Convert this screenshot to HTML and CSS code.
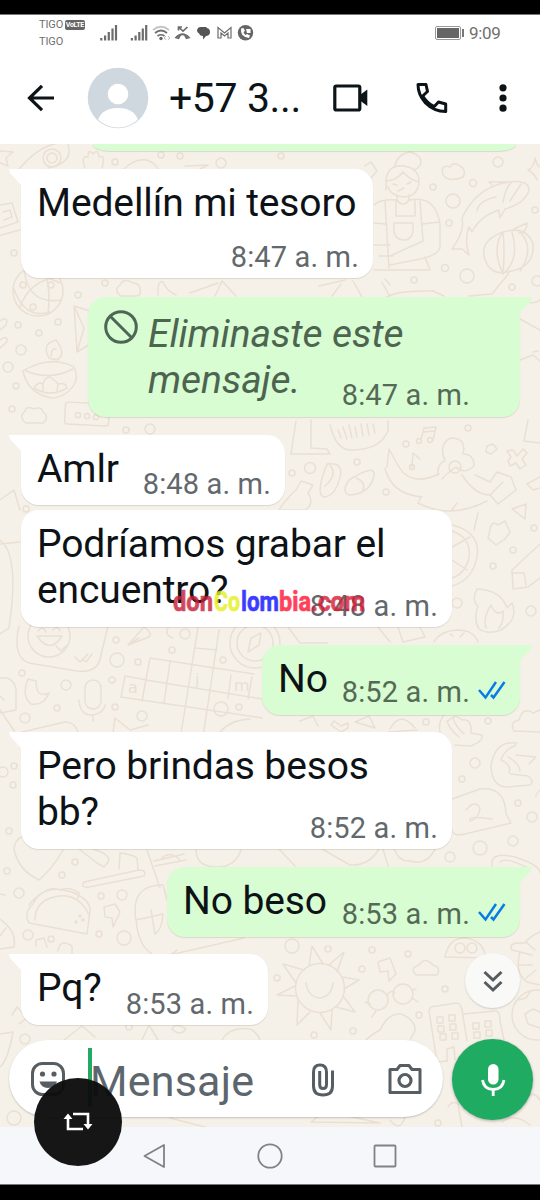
FILE: index.html
```html
<!DOCTYPE html>
<html lang="es">
<head>
<meta charset="utf-8">
<title>Chat</title>
<link rel="stylesheet" href="styles.css">
</head>
<body>
<div class="phone">
  <div class="statusbar">
    <div class="carriers"><div>TIGO <b class="volte">VoLTE</b></div><div>TIGO</div></div>
    <svg class="status-icons" width="156" height="24" viewBox="100 20 156 24">
      <g stroke="#6c6c6c" stroke-width="2.2"><path d="M101.3 40.500V38M105.100 40.500V35.500M108.800 40.500V32M112.500 40.500V28.500M116 40.500V25M131.900 40.500V38M135.600 40.500V35.500M139.300 40.500V32M142.800 40.500V28.500M146.200 40.500V25"/></g>
      <g fill="none" stroke="#6c6c6c" stroke-width="1.700"><path d="M153 30Q161 23.500 169 30" stroke="#c4c4c4"/><path d="M155 33Q161 28 167 33M157.500 36Q161 33.500 164.500 36"/><path d="M176 37.500Q182.500 30.500 189 37.500L186.500 38.300L184.800 35Q182.500 34 180.200 35L178.500 38.300ZM178.500 27L183 31.200L187.500 27M178.500 30.500V27H182"/></g>
      <circle cx="161" cy="38.500" r="1.700" fill="#666"/><path d="M166 36.200L164 38L166 39.800M168 36.200L170 38L168 39.800" stroke="#bbb" fill="none"/>
      <path d="M200.500 27H206Q207.500 28.500 208.500 28.500Q210.500 30 210 33Q209 36 206 36L203 39.500V36Q200 36 199 33.500Q197 33 197 30Q198 27 200.500 27Z" fill="#555"/>
      <path d="M218 38V27.500L224.500 33L231 27.500V38H228V33L224.500 36L221 33V38Z" fill="none" stroke="#6c6c6c" stroke-width="1.200"/>
      <circle cx="245.500" cy="32.700" r="7.700" fill="#666"/><path d="M241 28.500Q240 37 249 38L250 35.500L247 34L245.500 35Q244 34 243.500 32L245 31L243.500 28ZM246 29H250.500V33H247Z" fill="#fff"/>
    </svg>
    <div class="battery"><i></i></div>
    <span class="clock">9:09</span>
  </div>
  <header class="appbar">
    <svg class="ic-back" width="28" height="28" viewBox="27 84 28 28"><path d="M54 98H29.500M42 85.800L29.500 98L42 110.200" fill="none" stroke="#0d1418" stroke-width="3.200"/></svg>
    <svg class="avatar" width="62" height="62" viewBox="0 0 62 62"><clipPath id="av"><circle cx="31" cy="31" r="29.500"/></clipPath><circle cx="31" cy="31" r="30.300" fill="#cfd8df"/><g clip-path="url(#av)" fill="#fff"><circle cx="31" cy="27" r="10.300"/><path d="M10 58Q12 41 31 41Q50 41 52 58V62H10Z"/></g></svg>
    <h1 class="name">+57 3...</h1>
    <svg class="ic-video" width="36" height="30" viewBox="332 83 36 30"><rect x="334.800" y="86" width="25" height="24" rx="1.500" fill="none" stroke="#0d1418" stroke-width="3.200"/><path d="M360 95L367.300 89.500V106L360 100.500Z" fill="#0d1418"/></svg>
    <svg class="ic-phone" width="34" height="34" viewBox="415 81 34 34"><path d="M418 84.500H426L427.500 91.500L422.700 96Q427 103 434 106.700L438.500 102L445.700 104V111.500Q434 111.500 425.500 103Q418 94.500 418 84.500Z" fill="none" stroke="#0d1418" stroke-width="3" stroke-linejoin="round"/></svg>
    <svg class="ic-more" width="8" height="30" viewBox="0 0 8 30" fill="#0d1418"><circle cx="4" cy="4.800" r="3.600"/><circle cx="4" cy="15" r="3.600"/><circle cx="4" cy="25.200" r="3.600"/></svg>
  </header>
  <main class="chat">
    <svg class="wallpaper" width="540" height="983" viewBox="0 144 540 983">
      <g>
        <circle cx="115" cy="162" r="3"/><circle cx="161" cy="155" r="3"/><circle cx="180" cy="156" r="3"/><circle cx="221" cy="163" r="5"/><circle cx="281" cy="156" r="3"/><circle cx="498" cy="162" r="5"/><circle cx="433" cy="187" r="3"/><circle cx="473" cy="183" r="3.500"/><circle cx="453" cy="201" r="7"/><circle cx="449" cy="223" r="3"/><circle cx="445" cy="268" r="3.500"/><circle cx="467" cy="276" r="7"/><circle cx="414" cy="280" r="3"/><circle cx="512" cy="287" r="3"/><circle cx="537" cy="281" r="5"/><circle cx="535" cy="210" r="3"/><circle cx="14" cy="253" r="3"/><circle cx="105" cy="283" r="3"/><circle cx="78" cy="295" r="3"/><circle cx="18" cy="325" r="3"/><circle cx="58" cy="322" r="3"/><circle cx="39" cy="333" r="3"/><circle cx="21" cy="350" r="5"/><circle cx="8" cy="367" r="5"/><circle cx="16" cy="386" r="3"/><circle cx="12" cy="409" r="3"/><circle cx="126" cy="430" r="3"/><circle cx="150" cy="429" r="5"/><circle cx="468" cy="428" r="3"/><circle cx="406" cy="444" r="3"/><circle cx="310" cy="468" r="5.500"/><circle cx="292" cy="473" r="3"/><circle cx="357" cy="462" r="3"/><circle cx="386" cy="492" r="3"/><circle cx="26" cy="509" r="3"/><circle cx="493" cy="566" r="3"/><circle cx="513" cy="550" r="3"/><circle cx="534" cy="528" r="3"/><circle cx="457" cy="603" r="5"/><circle cx="531" cy="611" r="5"/><circle cx="116" cy="640" r="3"/><circle cx="117" cy="660" r="7"/><circle cx="138" cy="662" r="3"/><circle cx="185" cy="634" r="5"/><circle cx="172" cy="650" r="3"/><circle cx="223" cy="660" r="3"/><circle cx="22" cy="673" r="3"/><circle cx="66" cy="685" r="5"/><circle cx="112" cy="680" r="3"/><circle cx="57" cy="708" r="3"/><circle cx="25" cy="718" r="5"/><circle cx="142" cy="716" r="5"/><circle cx="115" cy="707" r="3"/><circle cx="221" cy="709" r="7"/><circle cx="239" cy="707" r="3"/><circle cx="14" cy="766" r="3"/><circle cx="3" cy="772" r="5"/><circle cx="13" cy="785" r="3"/><circle cx="9" cy="831" r="3"/><circle cx="7" cy="871" r="3"/><circle cx="75" cy="862" r="3"/><circle cx="62" cy="875" r="3"/><circle cx="19" cy="893" r="5"/><circle cx="101" cy="896" r="3"/><circle cx="122" cy="895" r="5"/><circle cx="28" cy="935" r="5"/><circle cx="51" cy="939" r="3"/><circle cx="99" cy="934" r="3"/><circle cx="124" cy="938" r="7"/><circle cx="475" cy="763" r="5"/><circle cx="462" cy="779" r="3"/><circle cx="518" cy="803" r="3"/><circle cx="532" cy="817" r="5"/><circle cx="480" cy="848" r="7"/><circle cx="513" cy="841" r="5"/><circle cx="450" cy="857" r="5"/><circle cx="426" cy="722" r="3"/><circle cx="488" cy="721" r="3"/><circle cx="292" cy="946" r="7"/><circle cx="328" cy="949" r="3"/><circle cx="372" cy="950" r="3"/><circle cx="408" cy="954" r="3"/><circle cx="362" cy="969" r="3"/><circle cx="277" cy="978" r="3"/><circle cx="445" cy="989" r="3"/><circle cx="419" cy="1015" r="3"/><circle cx="353" cy="1031" r="3"/><circle cx="314" cy="1035" r="3"/><circle cx="14" cy="1118" r="7"/><circle cx="438" cy="1123" r="3"/><circle cx="25" cy="1039" r="5"/><circle cx="129" cy="1027" r="3"/>
      </g>
      <circle cx="52" cy="158" r="9"/><circle cx="52" cy="158" r="5"/><path d="M18 170Q38 147 55 144M68 144Q74 163 48 168M0 151L13 152L6 158L8 166L0 163M85 168Q80 155 88 157Q88 148 93 154Q98 148 99 157Q106 154 102 168M124 169Q135 158 147 160Q155 163 158 169M185 166L208 165L200 169"/>
      <path d="M0 205L12 203L18 222L0 228M1 235L20 230M3 212L10 210L12 217L4 220"/>
      <circle cx="38" cy="291" r="25"/><path d="M24 270Q28 305 61 300M20 307Q30 280 58 277M14 289Q25 320 50 312M38 266Q52 275 48 314"/><circle cx="23" cy="285" r="3"/><circle cx="51" cy="285" r="3"/><circle cx="33" cy="307" r="3"/>
      <path d="M90 311L74 306L77 352L90 344M74 306L84 328L77 352M0 321Q9 315 6 325L0 330M0 340Q8 334 7 342L0 348"/>
      <path d="M49 358Q41 344 56 340Q67 354 57 360ZM51 356Q51 348 56 349M23 371Q50 355 74 367Q78 376 75 383Q67 397 52 398Q28 394 23 371ZM26 371Q50 381 73 369M34 388Q38 381 43 384Q45 377 50 377Q56 381 58 384Q66 382 67 388Q50 398 34 388ZM43 392L43 384M57 392L58 384"/>
      <rect x="65" y="403" width="44" height="22" rx="3" transform="rotate(3 85 414)"/><circle cx="78" cy="415" r="2.600"/><circle cx="87" cy="416" r="2.600"/><circle cx="96" cy="417" r="2.600"/>
      <path d="M26 423Q18 417 25 411Q27 405 34 409Q42 406 43 412Q50 417 43 423Z"/><path d="M121 296Q113 290 120 285Q124 277 133 283Q140 283 140 290Q142 296 135 296ZM158 295Q157 280 163 282Q166 290 176 295M190 293L218 283M215 296L222 281L236 296M51 279L60 283"/>
      <path d="M386 190V180Q388 164 404 166Q418 168 419 180Q419 196 404 197Q391 196 388 187M387 181Q397 180 403 172Q410 180 419 182M395 166Q397 154 410 152Q424 156 420 165Q418 169 413 170M393 184L397 185M407 184L411 182M398 191L404 188M397 195V200Q403 208 409 200V195M374 205Q380 199 397 200M410 200Q436 195 440 225V248Q438 254 425 258L390 265M374 223L385 224M422 224L440 222M385 201L389 268M420 201L423 241L390 256M396 200V216H415V200M394 223H413V232Q410 241 404 240Q396 240 394 232ZM374 245H390M374 270H430L425 257M379 256L393 256"/>
      <path d="M452 249Q465 232 462 218Q475 190 503 183Q530 178 529 191Q524 204 505 209L500 218L499 210Q480 216 472 232L469 227Q464 239 469 255L462 249ZM492 185L489 182L508 182M503 202Q506 187 511 183M521 184L510 201M477 211Q478 201 496 197"/>
      <path d="M503 232Q481 240 484 256Q489 276 507 272Q535 268 533 244Q526 225 503 232M503 232Q491 248 503 274Q520 260 512 232M503 232Q505 250 503 274M521 233Q535 249 520 271M514 229L527 223Q527 232 519 233M509 273L492 294L469 296M443 175Q440 164 450 167Q453 161 460 166Q467 170 463 177Q450 183 443 175ZM528 170Q534 168 535 158Q537 166 540 167M528 170Q535 174 537 180M365 166L371 162L377 171L369 180L364 175"/>
      <path d="M382 282L390 297M390 285L385 279M319 286L345 280M332 296L341 284M385 298Q396 290 433 291L444 296M540 330L520 319M520 360L533 355L540 361M533 352L538 351M527 302Q536 304 540 300M353 281L362 297"/>
      <path d="M296 421L291 454H330L327 449L311 448V420M330 425Q336 450 351 450Q380 450 388 431V421M338 430L341 438M343 427L347 439M349 425L352 438M355 427L357 437M361 424L363 436M367 424L369 435M373 424L375 433M421 440L424 428L436 427L433 440M423 432L435 431M412 467L413 453L420 459"/><circle cx="419" cy="441" r="2.500"/><circle cx="430" cy="440" r="2.500"/><circle cx="412" cy="467" r="2.500"/>
      <path d="M327 464Q340 462 341 472Q337 496 324 497Q315 494 327 464ZM349 480Q376 463 374 476Q370 494 349 495Q341 491 349 480ZM330 465Q338 475 325 486M356 478Q366 482 363 490M296 490L301 481L313 485L308 493Q315 504 305 510H279Q285 500 296 490Z"/>
      <path d="M387 467L389 449L395 460L399 467Q411 487 439 474M385 468Q391 494 422 497M438 475Q437 463 445 461Q438 444 451 438Q467 438 463 454Q474 454 474 466Q464 475 456 467Q446 474 442 479M475 475L490 482L497 472L511 477L516 490L498 504L490 495M462 475Q475 495 490 495L503 482M421 497L418 503Q450 520 487 501M457 503L451 511M478 513L474 530"/>
      <circle cx="455" cy="467" r="6"/><path d="M487 446L493 444L497 449L491 454L486 452ZM507 451L513 450L517 456L523 449L527 453L522 459L526 465L520 469L516 463L510 466L508 461L511 457ZM528 420L524 441L540 443M527 484L540 477M527 484L533 490L540 488"/>
      <path d="M452 525Q481 532 477 557Q473 580 452 586M452 531Q472 538 469 558Q465 574 452 578M452 547L470 537M452 560L467 570M490 530Q491 520 498 525L505 521L510 532L505 539L496 545L488 538ZM512 509L526 504L525 519ZM540 544L512 570L513 589L528 587L540 578M512 573L524 573L526 585"/>
      <path d="M477 589Q471 600 478 606Q473 619 479 629Q488 635 501 630Q519 619 512 603L507 608Q501 590 477 589ZM486 628Q483 617 491 605Q496 617 503 611Q504 622 499 628"/>
      <path d="M19 626Q12 657 29 663L77 671Q97 673 100 659L108 626"/><circle cx="49" cy="636" r="21"/><path d="M37 636Q50 655 62 636ZM38 631Q43 625 46 632M53 630Q58 625 60 631M56 646L61 651L66 646M75 657L80 662L88 654M82 659L86 662L92 654M128 645L144 627Q153 633 149 637L128 645ZM128 645L139 638M168 628Q164 635 173 638"/>
      <circle cx="255" cy="643" r="25"/><circle cx="255" cy="643" r="18"/><path d="M248 652L251 638L261 633L259 645ZM0 678Q14 676 16 690V710L0 713M4 700L0 696M28 679Q21 696 31 704Q44 706 49 693Q36 699 36 681Z"/><rect x="85" y="680" width="16" height="29" rx="8"/><path d="M79 700Q80 716 93 715Q104 713 105 705M93 715V721"/>
      <path d="M150 658L254 674M146 680L262 699M121 697L262 718M150 658L142 701M170 662L164 703M198 627L180 740M219 630L203 737M125 676L121 697M125 676L147 680M231 675L228 698M252 677L248 699M195 648L217 650M180 733L202 737"/>
      <g class="letters"><text x="128" y="693">a</text><text x="195" y="685">j</text><text x="234" y="691">m</text></g>
      <path d="M0 500L14 490L20 510M0 540Q20 555 9 628L0 634M0 544L20 542M15 732L0 710M113 732L115 718L130 730L148 725M22 732L65 722Q75 722 78 732M220 732Q230 720 250 719M300 721L313 716L318 726M355 722L369 716L375 728ZM334 721L341 726L348 723L348 728L341 732L331 725ZM390 729Q400 710 415 728M388 732L417 730"/>
      <path d="M288 627L300 643H327M378 627L390 642M398 627L403 642L425 637L420 627M434 642Q440 631 457 630Q474 630 478 642M450 634L453 636M464 633L460 637"/><path d="M444 715Q438 722 440 732M448 721Q455 713 462 720Q472 718 471 733L482 735Q484 741 471 746L455 745M459 737Q450 730 447 721M464 734Q455 726 453 718M517 743Q495 740 491 766Q492 787 507 787L530 785Q535 781 528 776L511 774M501 760Q504 750 516 745M501 760Q512 765 509 773M508 757Q519 763 520 771M516 755L536 757L529 764M514 731Q509 722 519 720Q523 706 533 713L540 710M514 731L540 732"/>
      <path d="M452 799L480 789Q505 786 506 814L511 823L465 834Q452 837 452 829M466 810Q475 799 480 808Q479 819 470 821Q468 815 492 819M492 866Q490 851 515 857Q540 865 540 873M500 862Q505 856 530 869M540 790Q535 795 536 796M279 849L295 866M322 849L350 865Q369 866 379 849M383 849L388 866M394 849Q399 862 410 861Q427 866 435 849"/>
      <path d="M14 849Q15 839 22 837M14 849Q18 870 39 880Q53 868 63 850M79 849L97 863M93 849Q112 855 108 862L104 867L97 863M119 869L120 853Q131 854 137 858L138 870M84 882L139 870Q147 870 144 876L89 887Q80 888 84 882ZM147 850L160 888M154 861L184 854M155 866L186 860M162 858Q170 850 180 860M196 850Q196 866 215 867Q235 868 241 850"/>
      <path d="M29 923Q23 913 33 904Q43 883 72 892Q91 900 90 911L87 934L29 923ZM35 920Q35 905 48 899Q76 888 89 915M29 905Q35 897 44 892Q52 886 60 890Q70 886 79 893L78 898M0 894L5 895M0 919Q17 931 14 947L0 949M0 936L6 928M36 946V940L44 938L47 947M58 951Q60 938 72 946V953M104 907L115 904L120 912L113 927L112 918L105 917ZM136 920Q130 885 163 885L167 900M136 920L163 914Q162 930 155 934L151 910M136 920Q139 953 160 957Q170 957 177 950M174 954L244 938"/>
      <circle cx="80" cy="916" r="1"/><circle cx="76" cy="922" r="1"/><circle cx="83" cy="920" r="1"/>
      <circle cx="320" cy="988" r="24.500"/><path d="M306 983Q308 997 320 998Q332 996 333 983M309 966L312 946L323 964M329 965L344 952L337 972M343 977L359 980L344 989M343 996L355 1012L336 1007M332 1010L331 1030L320 1013M310 1012L297 1025L298 1000M296 996L277 995L295 986M296 983L283 964L304 970"/>
      <path d="M378 962L390 958L396 974L389 981L388 971L380 972ZM416 975Q409 968 419 965Q425 956 433 965Q442 968 437 975ZM445 957Q449 938 464 938Q483 939 486 958Z"/><circle cx="460" cy="948" r="5"/><circle cx="472" cy="948" r="5"/>
      <circle cx="378" cy="1000" r="10"/><circle cx="403" cy="994" r="10"/><path d="M387 995Q391 989 395 993M370 1004L365 1002M376 1011L372 1017M412 998L418 1002M412 990L416 989M366 1040Q371 1035 380 1030Q388 1013 401 1014Q416 1020 415 1031L410 1040"/>
      <path d="M437 1062L429 1011Q429 1006 437 1006L457 1003Q461 1004 462 1010L467 1041M463 1014L495 1011Q500 1010 500 1021L504 1040M437 1062L447 1061"/><g><rect x="437" y="1017" width="6" height="6"/><rect x="449" y="1015" width="6" height="6"/><rect x="438" y="1026" width="6" height="6"/><rect x="450" y="1024" width="6" height="6"/><rect x="440" y="1034" width="6" height="6"/><rect x="452" y="1033" width="6" height="6"/><rect x="473" y="1023" width="6" height="6"/><rect x="485" y="1021" width="6" height="6"/><rect x="474" y="1032" width="6" height="6"/><rect x="486" y="1030" width="6" height="6"/><path d="M447 1061L447 1049L454 1047L455 1060"/></g>
      <circle cx="537" cy="1015" r="25"/><path d="M525 1014L533 1009L540 1012M525 1014L528 1024L540 1028M518 1000L526 998L530 992M540 932Q530 936 525 943Q507 942 512 950L520 952Q514 973 527 982L540 985M527 943L535 950M520 952L532 955M519 965L532 965M526 978L536 970"/>
      <path d="M0 1034L13 1032Q8 1060 0 1067M12 1015L17 1007L27 1018L19 1024M64 1040L82 1026L95 1037M142 1040L149 1025L158 1040M172 1029Q175 1022 186 1029Q180 1037 172 1029M222 1040Q230 1026 250 1029Q258 1033 260 1040M311 1122L325 1111L380 1123ZM170 1118L205 1127M390 1120Q400 1133 405 1117M448 1107Q452 1100 458 1104L462 1127M510 1110Q531 1085 540 1100M502 1122Q515 1112 530 1125"/>
    </svg>
    <div class="messages">
      <div class="msg out cut"></div>
      <div class="msg in tail m1"><p>Medellín mi tesoro</p><time>8:47 a. m.</time></div>
      <div class="msg out tail m2"><svg class="ban" width="36" height="36" viewBox="0 0 36 36"><circle cx="18" cy="18" r="15.300"/><path d="M7.500 7.500L28.500 28.500"/></svg><p>Eliminaste este<br>mensaje.</p><time>8:47 a. m.</time></div>
      <div class="msg in tail m3"><p>Amlr</p><time>8:48 a. m.</time></div>
      <div class="msg in m4"><p>Podríamos grabar el<br>encuentro?</p><time>8:48 a. m.</time></div>
      <div class="msg out tail m5"><p>No</p><time>8:52 a. m.</time><svg class="ticks" width="28" height="20" viewBox="0 0 28 20"><path d="M1 10L7.500 17.500L18 2M13 15L15.500 17.500L26.500 2"/></svg></div>
      <div class="msg in tail m6"><p>Pero brindas besos<br>bb?</p><time>8:52 a. m.</time></div>
      <div class="msg out tail m7"><p>No beso</p><time>8:53 a. m.</time><svg class="ticks" width="28" height="20" viewBox="0 0 28 20"><path d="M1 10L7.500 17.500L18 2M13 15L15.500 17.500L26.500 2"/></svg></div>
      <div class="msg in tail m8"><p>Pq?</p><time>8:53 a. m.</time></div>
    </div>
    <div class="composer">
      <div class="field">
        <svg class="ic-emoji" width="36" height="36" viewBox="0 0 36 36"><rect x="2.500" y="2.500" width="31" height="31" rx="10" fill="none" stroke="#565e64" stroke-width="3"/><circle cx="12.500" cy="13" r="2.600" fill="#565e64"/><circle cx="24" cy="13" r="2.600" fill="#565e64"/><path d="M9.500 20.500H27Q25 27 18 27Q11 26.500 9.500 20.500Z" fill="#565e64"/></svg>
        <i class="caret"></i><span class="hint">Mensaje</span>
        <svg class="ic-clip" width="24" height="36" viewBox="0 0 24 36"><path d="M21.500 8.500V24Q21.500 33 12 33Q2.500 33 2.500 24V10Q2.500 3 9 3Q15.500 3 15.500 10V22.500Q15.500 26.500 12 26.500Q8.700 26.500 8.700 22.500V9" fill="none" stroke="#565e64" stroke-width="3"/></svg>
        <svg class="ic-cam" width="36" height="32" viewBox="0 0 36 32"><path d="M3 6.500H10L13 2.500H22L25 6.500H33V29.500H3Z" fill="none" stroke="#565e64" stroke-width="3" stroke-linejoin="round"/><circle cx="18" cy="17.500" r="6" fill="none" stroke="#565e64" stroke-width="3.200"/></svg>
      </div>
      <div class="mic"><svg width="26" height="34" viewBox="0 0 26 34"><rect x="8" y="1" width="10.500" height="20.500" rx="5.200" fill="#fff"/><path d="M2.500 17Q4 26.500 13.200 26.500Q22.500 26.500 24 17M13.200 26V33" fill="none" stroke="#fff" stroke-width="2.800"/></svg></div>
    </div>
  </main>
  <nav class="navbar">
    <svg width="24" height="26" viewBox="0 0 24 26"><path d="M22 2V24L2.500 13Z"/></svg>
    <svg width="28" height="28" viewBox="0 0 28 28"><circle cx="14" cy="14" r="11.700"/></svg>
    <svg width="24" height="24" viewBox="0 0 24 24"><rect x="1.500" y="1.500" width="21" height="21" rx="1"/></svg>
  </nav>
  <div class="scroll-down"><svg width="20" height="24" viewBox="0 0 20 24"><path d="M1.500 3L10 11L18.500 3M1.500 13L10 21L18.500 13"/></svg></div>
  <svg class="watermark" width="200" height="36" viewBox="0 0 200 36"><text y="27" lengthAdjust="spacingAndGlyphs"><tspan x="3" textLength="40" lengthAdjust="spacingAndGlyphs" fill="#c91f3a" stroke="#c91f3a">don</tspan><tspan x="44" textLength="26" lengthAdjust="spacingAndGlyphs" fill="#e6ee20" stroke="#e6ee20">Co</tspan><tspan x="71" textLength="38" lengthAdjust="spacingAndGlyphs" fill="#1212ff" stroke="#1212ff">lom</tspan><tspan x="109" textLength="32" lengthAdjust="spacingAndGlyphs" fill="#ff1838" stroke="#ff1838">bia</tspan><tspan x="141" textLength="54" lengthAdjust="spacingAndGlyphs" fill="#d81f3a" stroke="#d81f3a">.com</tspan></text></svg>
  <div class="repost"><svg width="30" height="20" viewBox="0 0 30 20"><path d="M10 2H25V14M20 17H5V4" fill="none" stroke="#fff" stroke-width="2.600"/><path d="M.5 7L5 1.500L9.500 7ZM20.500 12L25 17.500L29.500 12Z" fill="#fff"/></svg></div>
</div>
</body>
</html>
```
FILE: styles.css
```css
* { box-sizing: border-box; }
body { margin: 0; background: #000; font-family: Roboto, "Liberation Sans", sans-serif; }
p, h1 { margin: 0; font-weight: 400; }
svg { display: block; flex: none; }

.phone { position: relative; width: 540px; height: 1200px; padding: 14px 0 15px; background: #000; display: flex; flex-direction: column; overflow: hidden; }

.statusbar { height: 38px; background: #fff; display: flex; align-items: flex-start; border-top: 1px solid #777; color: #707070; flex: none; }
.carriers { width: 61px; margin-left: 39px; padding-top: 2px; font-size: 11px; line-height: 16.5px; letter-spacing: -.1px; white-space: nowrap; }
.volte { display: inline-block; background: #666; color: #fff; font-size: 7px; line-height: 10px; width: 20px; text-align: center; border-radius: 2px; letter-spacing: -.3px; vertical-align: 1px; margin-left: -1px; }
.status-icons { margin-top: 5px; }
.battery { position: relative; width: 26px; height: 14px; border: 1px solid #999; border-radius: 2px; padding: 1px; margin: 11px 0 0 179px; }
.battery i { display: block; height: 10px; background: #666; }
.battery::after { content: ""; position: absolute; right: -4px; top: 2px; width: 2px; height: 8px; background: #777; }
.clock { font-size: 17px; line-height: 20px; margin: 8px 0 0 8px; letter-spacing: -.3px; }

.appbar { height: 92px; background: #fff; display: flex; align-items: center; color: #0d1418; flex: none; }
.ic-back { margin-left: 27px; }
.avatar { margin-left: 32px; }
.name { width: 142px; margin-left: 20px; font-size: 41px; line-height: 48px; white-space: nowrap; letter-spacing: -.4px; }
.ic-video { margin-left: 21px; }
.ic-phone { margin-left: 47px; }
.ic-more { margin-left: 50px; }

.chat { height: 983px; background: #f5f1e9; position: relative; overflow: hidden; flex: none; display: flex; flex-direction: column; }
.wallpaper { position: absolute; left: 0; top: 0; fill: none; stroke: #eadfd3; stroke-width: 1.5; stroke-linejoin: round; stroke-linecap: round; }
.letters { fill: #eadfd3; stroke: none; font: 16px "DejaVu Sans", sans-serif; }

.messages { position: relative; display: flex; flex-direction: column; align-items: flex-start; padding: 0 20px 0 21px; height: 896px; }
.msg { position: relative; display: grid; border-radius: 18px; padding: 11px 14px 4px 16px; box-shadow: 0 1px 1px rgba(80, 70, 50, .15); }
.msg > * { grid-area: 1 / 1; }
.msg p { font-size: 39px; line-height: 46px; letter-spacing: -.12px; color: #0d1216; white-space: nowrap; }
.msg time { font-size: 29px; line-height: 34px; letter-spacing: .15px; color: #62686b; justify-self: end; align-self: end; white-space: nowrap; }
.in { background: #fff; }
.out { background: #d8fdd2; align-self: flex-end; padding-right: 50px; padding-bottom: 6px; }
.out time { color: #546a56; }
.in.tail { border-top-left-radius: 0; }
.out.tail { border-top-right-radius: 0; }
.tail::before { content: ""; position: absolute; top: 0; width: 13px; height: 17px; }
.in.tail::before { left: -12px; background: #fff; clip-path: polygon(0 0, 100% 0, 100% 100%, 1px 4px); }
.out.tail::before { right: -12px; background: #d8fdd2; clip-path: polygon(0 0, 100% 0, 12px 4px, 0 100%); }
.cut { width: 423px; height: 7px; padding: 0; margin-right: 4px; border-radius: 0 0 18px 18px / 0 0 7px 7px; }
.m1 { width: 352px; height: 109px; margin-top: 18px; }
.m2 { width: 432px; height: 120px; margin-top: 19px; padding: 14px 50px 5px 60px; }
.m2 p { font-style: italic; color: #4d6451; }
.ban { position: relative; left: -45px; top: -2px; fill: none; stroke: #4f6657; stroke-width: 3; }
.m3 { width: 264px; height: 70px; margin-top: 18px; }
.m4 { width: 431px; height: 117px; margin-top: 5px; }
.m5 { width: 258px; height: 70px; margin-top: 18px; }
.m6 { width: 431px; height: 117px; margin-top: 17px; }
.m7 { width: 353px; height: 70px; margin-top: 18px; }
.m8 { width: 247px; height: 71px; margin-top: 17px; }
.ticks { justify-self: end; align-self: end; margin: 0 -36px 9px 0; fill: none; stroke: #087be8; stroke-width: 2.5; }

.composer { position: relative; display: flex; align-items: flex-start; gap: 9px; padding-left: 9px; height: 87px; flex: none; }
.field { width: 434px; height: 77px; border-radius: 39px; background: #fff; display: flex; align-items: center; box-shadow: 0 1px 2px rgba(0, 0, 0, .2); }
.ic-emoji { margin-left: 21px; }
.caret { width: 4px; height: 59px; background: #23a866; margin: -2px 0 0 22px; }
.hint { width: 214px; font-size: 43px; line-height: 54px; letter-spacing: .2px; color: #5d666c; margin: 4px 0 0 -2px; }
.ic-clip { margin: 2px 0 0 7px; }
.ic-cam { margin-left: 52px; }
.mic { width: 81px; height: 81px; margin-top: -1px; border-radius: 50%; background: #1fab61; display: flex; align-items: center; justify-content: center; box-shadow: 0 1px 3px rgba(0, 0, 0, .3); }

.navbar { height: 58px; background: #f5f7fa; border-bottom: 1px solid #777; display: flex; align-items: center; justify-content: space-between; padding: 0 143px 0 142px; flex: none; }
.navbar svg { fill: none; stroke: #808285; stroke-width: 1.8; stroke-linejoin: round; }

.scroll-down { position: absolute; left: 465px; top: 953px; width: 55px; height: 55px; border-radius: 50%; background: #f9f9f8; box-shadow: 0 1px 2px rgba(0, 0, 0, .15); display: flex; align-items: center; justify-content: center; }
.scroll-down path { fill: none; stroke: #565c60; stroke-width: 3; }
.watermark { position: absolute; left: 170px; top: 584px; opacity: .82; }
.watermark text { font: 700 27px Roboto, sans-serif; stroke-width: .7; }
.repost { position: absolute; left: 34px; top: 1078px; width: 88px; height: 88px; border-radius: 50%; background: rgba(12, 12, 12, .96); display: flex; align-items: center; justify-content: center; }
```
